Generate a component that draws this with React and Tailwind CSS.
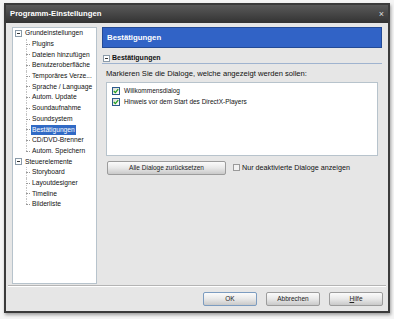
import React from 'react'

const font = { fontFamily: '"Liberation Sans", Arial, sans-serif' }

const Minus = () => (
  <span className="w-[7px] h-[7px] border border-[#8a9aa8] bg-white flex items-center justify-center shrink-0">
    <span className="w-[3px] h-px bg-[#333]"></span>
  </span>
)

const Check = ({ checked }) => (
  <span className="w-[8px] h-[8px] border border-[#2c5a8c] bg-gradient-to-br from-[#dcdcd4] to-white flex items-center justify-center shrink-0">
    {checked && (
      <svg width="6" height="6" viewBox="0 0 6 6">
        <path d="M0.8 3 L2.4 4.6 L5.2 1.2" stroke="#21a121" strokeWidth="1.3" fill="none" />
      </svg>
    )}
  </span>
)

const groups = [
  {
    name: 'Grundeinstellungen',
    items: [
      'Plugins',
      'Dateien hinzufügen',
      'Benutzeroberfläche',
      'Temporäres Verze...',
      'Sprache / Language',
      'Autom. Update',
      'Soundaufnahme',
      'Soundsystem',
      'Bestätigungen',
      'CD/DVD-Brenner',
      'Autom. Speichern',
    ],
  },
  {
    name: 'Steuerelemente',
    items: ['Storyboard', 'Layoutdesigner', 'Timeline', 'Bilderliste'],
  },
]

const Btn = ({ children, def, className = '' }) => (
  <button
    className={`h-[14px] border rounded-[2px] bg-gradient-to-b from-[#fbfbfb] via-[#e8e8e8] to-[#c9c9c9] text-[6.5px] text-[#222] ${
      def ? 'border-[#7c9cc0]' : 'border-[#9c9c9c]'
    } ${className}`}
  >
    {children}
  </button>
)

export default function App() {
  return (
    <div className="w-[394px] h-[319px] bg-[#f5f5f5] pt-[3px] pl-[4px] text-[#111]" style={font}>
      <div className="w-[386px] h-[310px] border-2 border-[#3b3b3b] bg-[#e6e6e6] flex flex-col shadow-[1px_2px_3px_rgba(0,0,0,0.35)]">
        {/* Titelleiste */}
        <div className="h-[18px] bg-gradient-to-b from-[#5a5a5a] to-[#333] flex items-center justify-between pl-[4px] pr-[4px] shrink-0">
          <span className="text-white font-bold text-[7.7px]">Programm-Einstellungen</span>
          <span className="text-[#ddd] text-[9px] leading-none">×</span>
        </div>

        <div className="flex gap-[5px] pl-[6px] pr-[6px] pt-[4px] h-[260px]">
          {/* Baum */}
          <div className="w-[85px] h-[257px] bg-white border border-[#b7c3cc] shrink-0 text-[6.7px]">
            {groups.map((g) => (
              <div key={g.name}>
                <div className="h-[10.7px] flex items-center gap-[2px] pl-[2px]">
                  <Minus />
                  <span className="pl-[1px]">{g.name}</span>
                </div>
                {g.items.map((it, i) => (
                  <div key={it} className="h-[10.7px] flex items-center relative pl-[18px]">
                    <span className={`absolute left-[13px] top-0 border-l border-dotted border-[#c4c4c4] ${i === g.items.length - 1 ? 'h-[5px]' : 'h-full'}`}></span>
                    <span className="absolute left-[13px] top-[5px] w-[4px] border-t border-dotted border-[#999]"></span>
                    <span className={`px-[1px] leading-[10px] ${it === 'Bestätigungen' ? 'bg-[#316ac5] text-white' : ''}`}>{it}</span>
                  </div>
                ))}
              </div>
            ))}
          </div>

          {/* Inhalt */}
          <div className="flex-1 flex flex-col">
            <div className="h-[21px] bg-[#3163c6] border border-[#234a96] flex items-center pl-[4px]">
              <span className="text-white font-bold text-[7.8px]">Bestätigungen</span>
            </div>
            <div className="mt-[5px] h-[11px] flex items-center gap-[2px] pl-[1px] border-b border-[#9fb3cf]">
              <Minus />
              <span className="font-bold text-[7px]">Bestätigungen</span>
            </div>
            <div className="text-[7.6px] leading-[9px] mt-[5px] pl-[4px]">Markieren Sie die Dialoge, welche angezeigt werden sollen:</div>
            <div className="mt-[4px] ml-[4px] mr-[4px] h-[74px] bg-white border border-[#b7c3cc] pt-[2px] pl-[5px] text-[6.5px]">
              <div className="h-[11px] flex items-center gap-[4px]">
                <Check checked />
                <span>Willkommensdialog</span>
              </div>
              <div className="h-[11px] flex items-center gap-[4px]">
                <Check checked />
                <span>Hinweis vor dem Start des DirectX-Players</span>
              </div>
            </div>
            <div className="mt-[5px] ml-[5px] flex items-center gap-[7px]">
              <Btn className="w-[119px]">Alle Dialoge zurücksetzen</Btn>
              <div className="flex items-center gap-[2px] text-[7.2px]">
                <span className="w-[7px] h-[7px] border border-[#9a9a9a] bg-[#f2f2f2]"></span>
                <span>Nur deaktivierte Dialoge anzeigen</span>
              </div>
            </div>
          </div>
        </div>

        {/* Trenner + Buttons */}
        <div className="mt-[2px] mx-[2px] border-t border-[#b4b4b4] border-b border-b-white"></div>
        <div className="flex justify-end gap-[9px] pr-[5px] pt-[5px]">
          <Btn def className="w-[54px]">OK</Btn>
          <Btn className="w-[54px]">Abbrechen</Btn>
          <Btn className="w-[54px]">
            <span className="underline">H</span>ilfe
          </Btn>
        </div>
      </div>
    </div>
  )
}
